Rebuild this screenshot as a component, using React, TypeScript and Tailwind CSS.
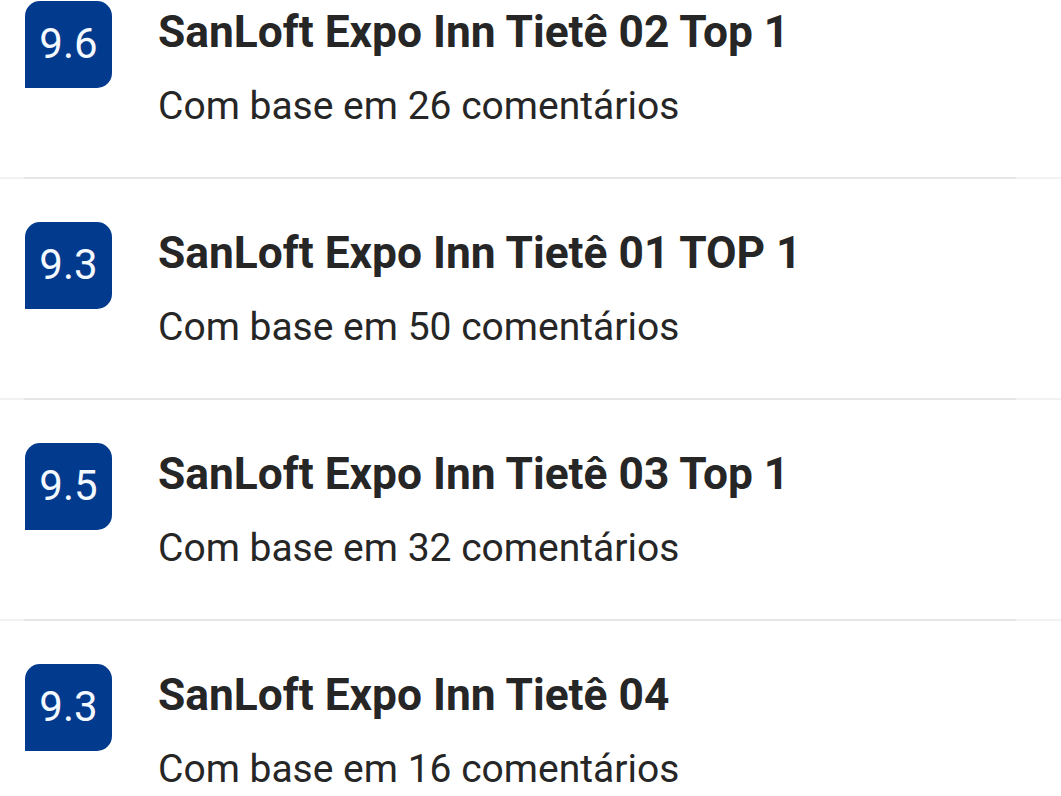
import React from "react";

const items = [
  { score: "9.6", title: "SanLoft Expo Inn Tietê 02 Top 1", count: 26 },
  { score: "9.3", title: "SanLoft Expo Inn Tietê 01 TOP 1", count: 50 },
  { score: "9.5", title: "SanLoft Expo Inn Tietê 03 Top 1", count: 32 },
  { score: "9.3", title: "SanLoft Expo Inn Tietê 04", count: 16 },
];

export default function App() {
  return (
    <div
      className="w-[1061px] h-[796px] overflow-hidden bg-white pt-[1px]"
      style={{ fontFamily: "Roboto, 'Noto Sans', sans-serif" }}
    >
      {items.map((it, i) => (
        <div key={i} className={i === 0 ? "" : "pt-[43px]"}>
          <div className="flex h-[176px]">
            <div className="ml-[25px] w-[87px] h-[87px] shrink-0 bg-[#023a8e] rounded-[15px] rounded-bl-none flex items-center justify-center">
              <span className="text-[42px] leading-none text-[#f4f8ff] -mt-[2px]">{it.score}</span>
            </div>
            <div className="ml-[46px] flex flex-col">
              <div className="mt-[7px] text-[44.3px] leading-[48px] font-bold text-[#262626]">
                {it.title}
              </div>
              <div className="mt-[26px] text-[39px] leading-[48px] text-[#262626]">
                Com base em {it.count} comentários
              </div>
            </div>
          </div>
          <div className="h-[2px] bg-[#f2f2f2] flex">
            <div className="ml-[24px] mr-[45px] flex-1 bg-[#e6e6e6]" />
          </div>
        </div>
      ))}
    </div>
  );
}
